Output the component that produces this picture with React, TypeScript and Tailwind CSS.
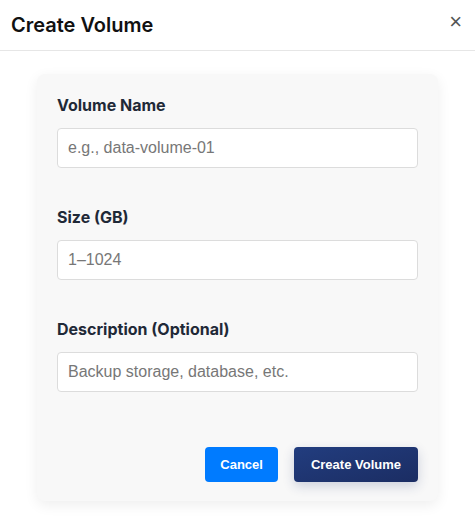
export default function App() {
  return (
    <div className="w-[475px] h-[516px] bg-white overflow-hidden" style={{ fontFamily: "Inter, 'Liberation Sans', sans-serif" }}>
      <div className="h-[51px] border-b border-[#e6e6e6] flex items-center justify-between pl-[11px] pr-[13px]">
        <h2 className="text-[20px] font-semibold text-[#111111] leading-none">Create Volume</h2>
        <button className="text-[#555555] text-[22px] leading-none pb-[6px] font-['Liberation_Sans',sans-serif]">×</button>
      </div>
      <div className="pt-[23px] px-[37px]">
        <div className="bg-[#f8f8f8] rounded-[8px] shadow-[0_4px_14px_rgba(0,0,0,0.07)] px-[20px] pt-[20px] pb-[19px]">
          {[
            { label: "Volume Name", ph: "e.g., data-volume-01" },
            { label: "Size (GB)", ph: "1–1024" },
            { label: "Description (Optional)", ph: "Backup storage, database, etc." },
          ].map((f, i) => (
            <div key={i} className={i < 2 ? "mb-[38px]" : "mb-[55px]"}>
              <div className="text-[16px] font-bold text-[#1f2937] leading-[22px] mb-[12px]">{f.label}</div>
              <input
                placeholder={f.ph}
                className="w-full h-[40px] bg-white border border-[#dcdcdc] rounded-[4px] px-[10px] text-[16px] font-['Liberation_Sans',sans-serif] placeholder:text-[#777777] outline-none"
              />
            </div>
          ))}
          <div className="flex justify-end gap-[16px]">
            <button className="h-[35px] px-[15px] rounded-[4px] bg-[#007bff] text-white text-[13px] font-bold font-['Liberation_Sans',sans-serif]">Cancel</button>
            <button className="h-[35px] px-[17px] rounded-[4px] bg-gradient-to-br from-[#223d7f] to-[#1b2d63] text-white text-[13px] font-bold font-['Liberation_Sans',sans-serif] shadow-[0_4px_12px_rgba(30,50,110,0.2)]">Create Volume</button>
          </div>
        </div>
      </div>
    </div>
  );
}
